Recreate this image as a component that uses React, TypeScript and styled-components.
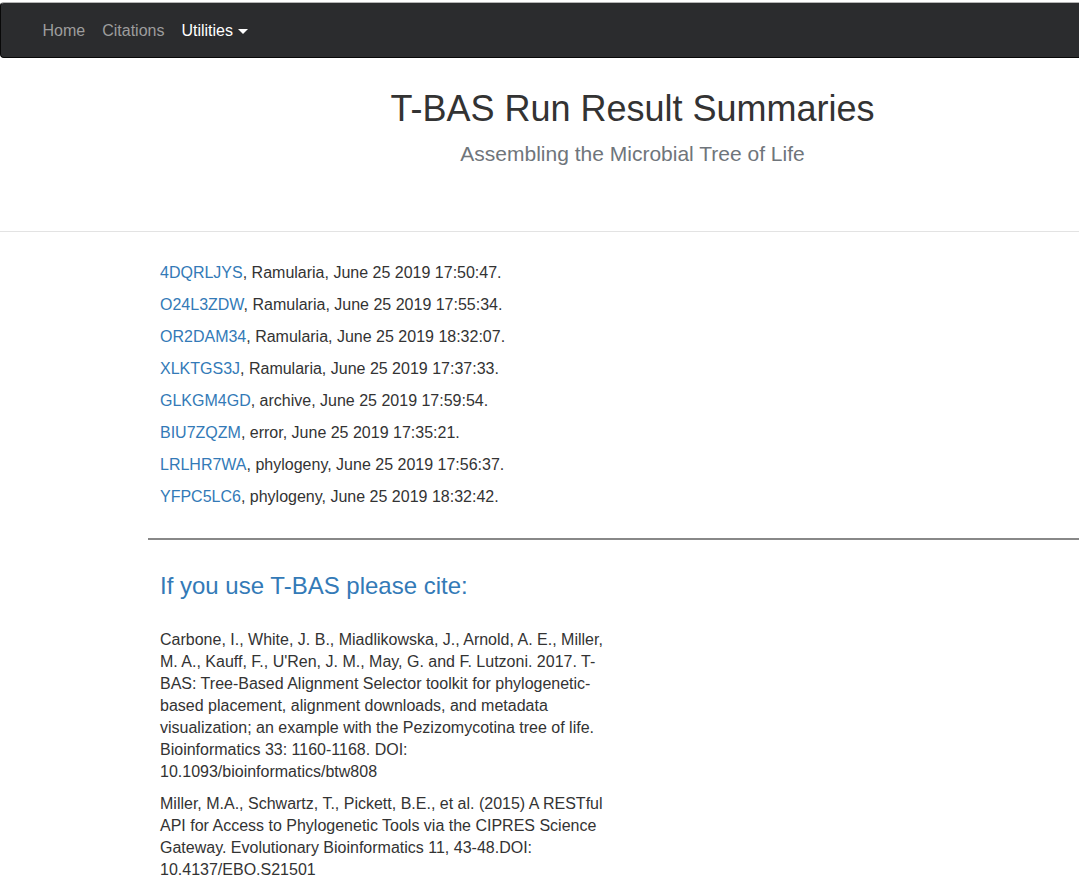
import React from 'react';
import styled, { createGlobalStyle } from 'styled-components';

const GlobalStyle = createGlobalStyle`
  html, body {
    margin: 0;
    padding: 0;
    overflow-x: hidden;
    background: #fff;
  }
  body {
    font-family: "Liberation Sans", Arial, Helvetica, sans-serif;
    font-size: 16px;
    color: #333;
  }
`;

const Navbar = styled.nav`
  margin-top: 2px;
  height: 56px;
  box-sizing: border-box;
  background: #2b2c2e;
  border: 1px solid #080808;
  border-top-color: #b5b5b5;
  border-right: none;
  border-radius: 4px 0 0 4px;
  display: flex;
  align-items: center;
  padding: 1px 0 0 33px;
`;

const NavItem = styled.a<{ $active?: boolean }>`
  display: flex;
  align-items: center;
  padding: 0 8.5px;
  font-size: 16px;
  color: ${p => (p.$active ? '#fff' : '#9d9d9d')};
  text-decoration: none;
  cursor: pointer;
`;

const Caret = styled.span`
  display: inline-block;
  width: 0;
  height: 0;
  margin-left: 5px;
  margin-top: 1px;
  border-top: 5px solid #fff;
  border-left: 5px solid transparent;
  border-right: 5px solid transparent;
`;

const Header = styled.header`
  text-align: center;
  padding: 31px 0 66px 186px;
  border-bottom: 1px solid #e3e3e3;
`;

const Title = styled.h1`
  margin: 0;
  font-size: 36px;
  font-weight: 400;
  line-height: 40px;
  color: #333;
`;

const Subtitle = styled.p`
  margin: 13px 0 0;
  font-size: 21px;
  line-height: 23px;
  color: #6f757b;
`;

const Main = styled.main`
  margin-left: 148px;
`;

const RunList = styled.ul`
  list-style: none;
  margin: 0;
  padding: 25px 0 25px 12px;
`;

const RunRow = styled.li`
  line-height: 32px;
  font-size: 16px;
  color: #333;
`;

const RunLink = styled.a`
  color: #337ab7;
  text-decoration: none;
`;

const Divider = styled.hr`
  margin: 0;
  border: none;
  border-top: 2px solid #888;
`;

const CiteSection = styled.section`
  padding: 33px 0 0 12px;
`;

const CiteHeading = styled.h3`
  margin: 0 0 30px;
  font-size: 24px;
  font-weight: 400;
  line-height: 26px;
  color: #337ab7;
`;

const Citation = styled.p`
  width: 457px;
  margin: 0 0 10px;
  font-size: 16px;
  line-height: 22px;
  color: #333;
`;

const runs = [
  { id: '4DQRLJYS', kind: 'Ramularia', date: 'June 25 2019 17:50:47' },
  { id: 'O24L3ZDW', kind: 'Ramularia', date: 'June 25 2019 17:55:34' },
  { id: 'OR2DAM34', kind: 'Ramularia', date: 'June 25 2019 18:32:07' },
  { id: 'XLKTGS3J', kind: 'Ramularia', date: 'June 25 2019 17:37:33' },
  { id: 'GLKGM4GD', kind: 'archive', date: 'June 25 2019 17:59:54' },
  { id: 'BIU7ZQZM', kind: 'error', date: 'June 25 2019 17:35:21' },
  { id: 'LRLHR7WA', kind: 'phylogeny', date: 'June 25 2019 17:56:37' },
  { id: 'YFPC5LC6', kind: 'phylogeny', date: 'June 25 2019 18:32:42' },
];

const App: React.FC = () => {
  return (
    <>
      <GlobalStyle />
      <Navbar>
        <NavItem>Home</NavItem>
        <NavItem>Citations</NavItem>
        <NavItem $active>
          Utilities
          <Caret />
        </NavItem>
      </Navbar>

      <Header>
        <Title>T-BAS Run Result Summaries</Title>
        <Subtitle>Assembling the Microbial Tree of Life</Subtitle>
      </Header>

      <Main>
        <RunList>
          {runs.map(run => (
            <RunRow key={run.id}>
              <RunLink href="#">{run.id}</RunLink>, {run.kind}, {run.date}.
            </RunRow>
          ))}
        </RunList>

        <Divider />

        <CiteSection>
          <CiteHeading>If you use T-BAS please cite:</CiteHeading>
          <Citation>
            Carbone, I., White, J. B., Miadlikowska, J., Arnold, A. E., Miller, M. A., Kauff, F.,
            U'Ren, J. M., May, G. and F. Lutzoni. 2017. T-BAS: Tree-Based Alignment Selector
            toolkit for phylogenetic-based placement, alignment downloads, and metadata
            visualization; an example with the Pezizomycotina tree of life. Bioinformatics 33:
            1160-1168. DOI: 10.1093/bioinformatics/btw808
          </Citation>
          <Citation>
            Miller, M.A., Schwartz, T., Pickett, B.E., et al. (2015) A RESTful API for Access to
            Phylogenetic Tools via the CIPRES Science Gateway. Evolutionary Bioinformatics 11,
            43-48.DOI: 10.4137/EBO.S21501
          </Citation>
        </CiteSection>
      </Main>
    </>
  );
};

export default App;
